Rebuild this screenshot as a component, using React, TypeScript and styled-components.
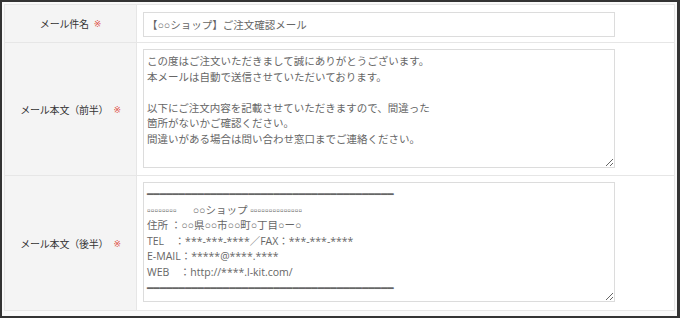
import React from "react";
import styled, { createGlobalStyle } from "styled-components";

const Global = createGlobalStyle`
  html, body { margin: 0; padding: 0; background: #ffffff; }
  * { box-sizing: border-box; }
`;

const FONT = `"Open Sans", "Liberation Sans", "DejaVu Sans", "Noto Sans CJK JP", sans-serif`;

const Frame = styled.div`
  width: 680px;
  height: 318px;
  border: 2px solid #333333;
  border-right-width: 3px;
  padding: 2px;
  background: #f9f9f9;
  font-family: ${FONT};
`;

const Table = styled.div`
  display: grid;
  grid-template-columns: 132px 1fr;
  grid-template-rows: 38px 133px 134px;
  border: 1px solid #e6e6e6;
  background: #ffffff;
`;

const Label = styled.div<{ $last?: boolean }>`
  display: flex;
  align-items: center;
  justify-content: center;
  background: #f4f4f4;
  border-right: 1px solid #e6e6e6;
  border-bottom: ${(p) => (p.$last ? "none" : "1px solid #e6e6e6")};
  font-size: 10px;
  color: #333333;
  letter-spacing: -0.2px;
`;

const Required = styled.span`
  color: #e0524a;
  font-size: 9px;
  margin-left: 5px;
`;

const Cell = styled.div<{ $last?: boolean }>`
  padding: 6px 0 0 6px;
  border-bottom: ${(p) => (p.$last ? "none" : "1px solid #e6e6e6")};
`;

const fieldBase = `
  display: block;
  width: 472px;
  border: 1px solid #dcdcdc;
  background: #ffffff;
  color: #666666;
  font-family: ${FONT};
  font-size: 10.5px;
  outline: none;
  margin: 0;
`;

const TextInput = styled.input`
  ${fieldBase}
  height: 25px;
  margin-top: 1px;
  padding: 0 3px;
`;

const TextArea = styled.textarea<{ $h: number }>`
  ${fieldBase}
  height: ${(p) => p.$h}px;
  padding: 4px 3px;
  line-height: 15.6px;
  white-space: pre;
  overflow: hidden;
  resize: both;
`;

const firstText =
  "この度はご注文いただきまして誠にありがとうございます。\n本メールは自動で送信させていただいております。\n\n以下にご注文内容を記載させていただきますので、間違った\n箇所がないかご確認ください。\n間違いがある場合は問い合わせ窓口までご連絡ください。";

const bar = "━".repeat(39);
const secondText = [
  bar,
  "▫▫▫▫▫▫▫▫　  ○○ショップ " + "▫".repeat(14),
  "住所 ：○○県○○市○○町○丁目○ー○",
  "TEL　：***-***-****／FAX：***-***-****",
  "E-MAIL：*****@****.****",
  "WEB　：http://****.l-kit.com/",
  bar,
].join("\n");

export default function App() {
  return (
    <>
      <Global />
      <Frame>
        <Table>
          <Label>
            メール件名<Required>※</Required>
          </Label>
          <Cell>
            <TextInput readOnly value="【○○ショップ】ご注文確認メール" />
          </Cell>
          <Label>
            メール本文（前半）<Required>※</Required>
          </Label>
          <Cell>
            <TextArea $h={119} readOnly value={firstText} />
          </Cell>
          <Label $last>
            メール本文（後半）<Required>※</Required>
          </Label>
          <Cell $last>
            <TextArea $h={120} readOnly value={secondText} />
          </Cell>
        </Table>
      </Frame>
    </>
  );
}
